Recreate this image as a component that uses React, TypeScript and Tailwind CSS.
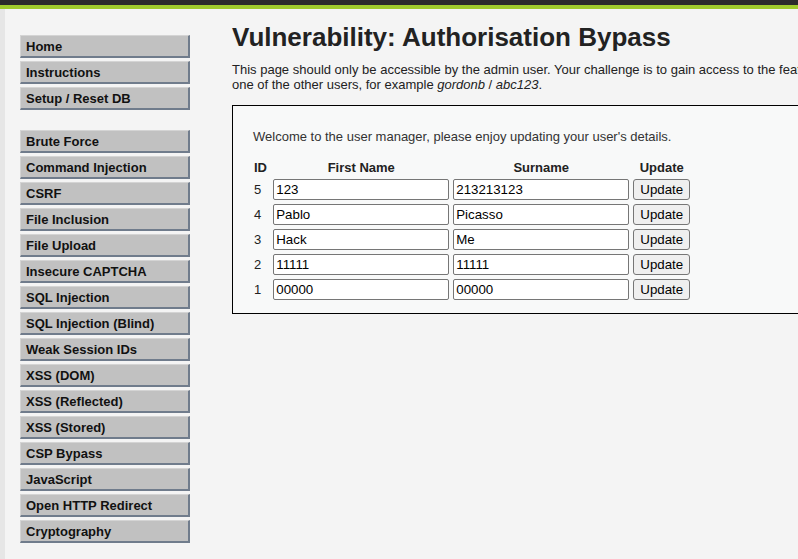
const menuTop = ["Home", "Instructions", "Setup / Reset DB"];

const menuVulns = [
  "Brute Force",
  "Command Injection",
  "CSRF",
  "File Inclusion",
  "File Upload",
  "Insecure CAPTCHA",
  "SQL Injection",
  "SQL Injection (Blind)",
  "Weak Session IDs",
  "XSS (DOM)",
  "XSS (Reflected)",
  "XSS (Stored)",
  "CSP Bypass",
  "JavaScript",
  "Open HTTP Redirect",
  "Cryptography",
];

const users = [
  { id: 5, first: "123", last: "213213123" },
  { id: 4, first: "Pablo", last: "Picasso" },
  { id: 3, first: "Hack", last: "Me" },
  { id: 2, first: "11111", last: "11111" },
  { id: 1, first: "00000", last: "00000" },
];

function MenuItem({ label }: { label: string }) {
  return (
    <li className="h-[23px] w-[170px] bg-[#c1c1c1] border-t border-l border-t-[#d4d4d4] border-l-[#d4d4d4] border-b-2 border-r-2 border-b-[#707c8c] border-r-[#707c8c] pl-[5px] text-[13px] leading-[21px] font-bold text-[#111]">
      {label}
    </li>
  );
}

export default function App() {
  return (
    <div
      className="w-[798px] h-[559px] overflow-hidden bg-[#f4f4f4] flex flex-col"
      style={{ fontFamily: '"Liberation Sans", Arial, sans-serif' }}
    >
      {/* Header bars */}
      <div className="h-[5px] bg-[#2b2b2b] shrink-0" />
      <div className="h-[4px] bg-[#9fcb2c] shrink-0" />

      <div className="flex flex-1">
        <div className="w-[5px] bg-[#e6e6e6] shrink-0" />

        {/* Menu */}
        <div className="w-[212px] shrink-0 pl-[15px] pt-[26px]">
          <ul className="flex flex-col gap-[3px]">
            {menuTop.map((m) => (
              <MenuItem key={m} label={m} />
            ))}
          </ul>
          <ul className="flex flex-col gap-[3px] mt-[20px]">
            {menuVulns.map((m) => (
              <MenuItem key={m} label={m} />
            ))}
          </ul>
        </div>

        {/* Main */}
        <div className="pl-[15px] pt-[13px] w-[700px] shrink-0 text-[#222]">
          <h1 className="text-[26px] font-bold leading-[30px] text-[#222]">
            Vulnerability: Authorisation Bypass
          </h1>
          <p className="mt-[10px] text-[13px] leading-[15px] whitespace-nowrap">
            This page should only be accessible by the admin user. Your challenge is to gain access to the features using
            <br />
            one of the other users, for example <i>gordonb</i> / <i>abc123</i>.
          </p>

          {/* User manager box */}
          <div className="mt-[13px] w-[620px] h-[209px] border border-black border-r-0 bg-[#f8f9f9] pl-[20px] pt-[23px]">
            <p className="text-[13px] leading-[15px] text-[#333]">
              Welcome to the user manager, please enjoy updating your user's details.
            </p>
            <table className="mt-[14px] border-separate border-spacing-[2px] -ml-[2px] text-[13px] text-[#222]">
              <thead>
                <tr className="h-[16px]">
                  <th className="px-[1px] text-left font-bold leading-[16px]">ID</th>
                  <th className="font-bold leading-[16px]">First Name</th>
                  <th className="font-bold leading-[16px]">Surname</th>
                  <th className="font-bold leading-[16px]">Update</th>
                </tr>
              </thead>
              <tbody>
                {users.map((u) => (
                  <tr key={u.id} className="h-[23px]">
                    <td className="pl-[1px] pr-[9px]">{u.id}</td>
                    <td className="p-[1px]">
                      <input
                        defaultValue={u.first}
                        className="w-[176px] h-[21px] border border-[#767676] rounded-[2px] bg-white px-[2px] text-[13.3px] text-black"
                      />
                    </td>
                    <td className="p-[1px]">
                      <input
                        defaultValue={u.last}
                        className="w-[176px] h-[21px] border border-[#767676] rounded-[2px] bg-white px-[2px] text-[13.3px] text-black"
                      />
                    </td>
                    <td className="p-[1px]">
                      <button className="w-[57px] h-[21px] border border-[#767676] rounded-[3px] bg-[#efefef] text-[13.3px] text-black">
                        Update
                      </button>
                    </td>
                  </tr>
                ))}
              </tbody>
            </table>
          </div>
        </div>
      </div>
    </div>
  );
}
